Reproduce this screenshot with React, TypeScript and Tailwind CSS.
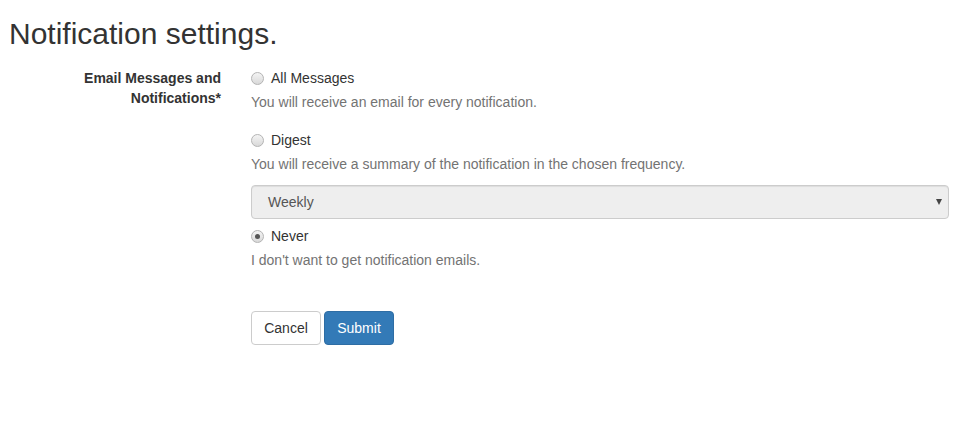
import { useState } from "react";

const options = [
  { id: "all", label: "All Messages", help: "You will receive an email for every notification." },
  { id: "digest", label: "Digest", help: "You will receive a summary of the notification in the chosen frequency." },
  { id: "never", label: "Never", help: "I don't want to get notification emails." },
];

function Radio({ checked }: { checked: boolean }) {
  return (
    <span className="flex h-[13px] w-[13px] shrink-0 items-center justify-center rounded-full border border-[#b4b4b4] bg-gradient-to-b from-[#f4f4f4] to-[#d9d9d9]">
      {checked && <span className="h-[5px] w-[5px] rounded-full bg-[#555]" />}
    </span>
  );
}

export default function App() {
  const [choice, setChoice] = useState("never");

  return (
    <div className="min-h-[430px] bg-white px-[7px] pt-[17px] text-[14px] leading-[20px] text-[#333] [font-family:'Liberation_Sans',Arial,sans-serif]">
      <h1 className="pl-[2px] text-[30px] leading-[33px] font-normal">Notification settings.</h1>

      <form className="mt-[18px] flex">
        <label className="w-[214px] shrink-0 text-right font-bold">
          Email Messages and
          <br />
          Notifications*
        </label>

        <div className="ml-[30px] w-[698px]">
          {options.map((o) => (
            <div key={o.id}>
              <div
                className={
                  o.id === "all" ? "" : o.id === "digest" ? "mt-[18px]" : "mt-[7px]"
                }
              >
                <button
                  type="button"
                  onClick={() => setChoice(o.id)}
                  className="flex h-[20px] items-center gap-[7px] text-left"
                >
                  <Radio checked={choice === o.id} />
                  <span>{o.label}</span>
                </button>
              </div>
              <p className="mt-[4px] text-[#737373]">{o.help}</p>
              {o.id === "digest" && (
                <div className="relative mt-[11px] h-[34px] rounded-[4px] border border-[#ccc] bg-[#eee] shadow-[inset_0_1px_1px_rgba(0,0,0,0.075)]">
                  <span className="absolute left-[16px] top-[6px] text-[#555]">Weekly</span>
                  <span className="absolute right-[6px] top-[13px] h-0 w-0 border-x-[3.5px] border-t-[6px] border-x-transparent border-t-[#444]" />
                </div>
              )}
            </div>
          ))}

          <div className="mt-[41px] flex gap-[3px]">
            <button
              type="button"
              className="h-[34px] w-[70px] rounded-[4px] border border-[#ccc] bg-white text-[#333]"
            >
              Cancel
            </button>
            <button
              type="submit"
              className="h-[34px] w-[70px] rounded-[4px] border border-[#2e6da4] bg-[#337ab7] text-white"
            >
              Submit
            </button>
          </div>
        </div>
      </form>
    </div>
  );
}
